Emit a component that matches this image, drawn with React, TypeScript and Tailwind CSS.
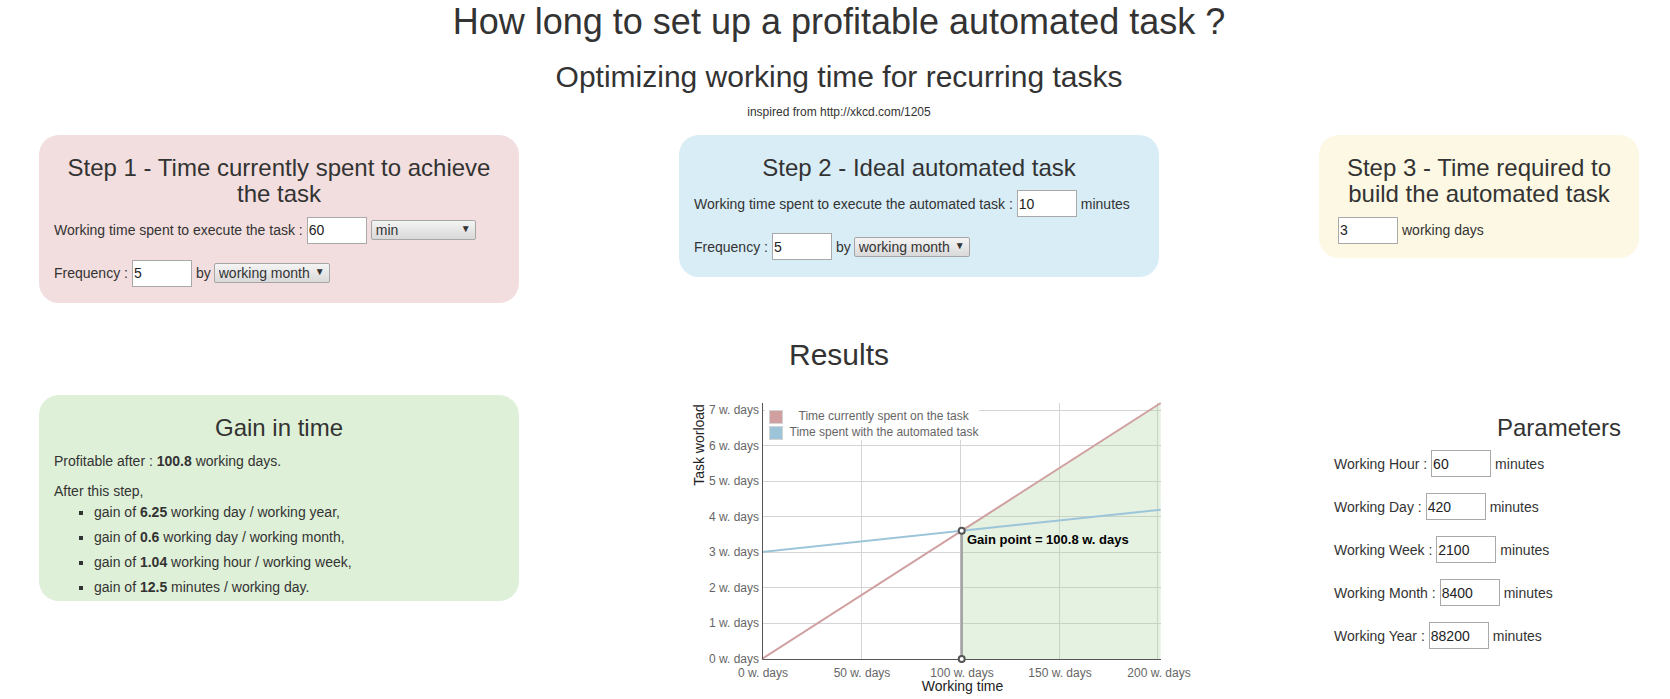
import React from 'react';

const NumberInput = ({ value }: { value: string }) => (
  <input
    type="text"
    defaultValue={value}
    className="w-[60px] h-[27px] border border-[#a9a9a9] bg-white px-[1px] text-[14px] text-[#222] outline-none"
  />
);

const Select = ({ options, width }: { options: string[]; width: string }) => (
  <span className={`relative inline-block h-[20px] ${width}`}>
    <select className="block h-full w-full appearance-none rounded-[2px] border border-[#a6a6a6] bg-gradient-to-b from-[#f4f4f4] to-[#d9d9d9] pl-1 text-[14px] leading-[18px] text-[#333] outline-none">
      {options.map((o) => (
        <option key={o}>{o}</option>
      ))}
    </select>
    <span className="pointer-events-none absolute right-[5px] top-[3px] text-[10px] leading-[12px] text-[#333]">▼</span>
  </span>
);

const Row = ({ children, className = '' }: { children: React.ReactNode; className?: string }) => (
  <div className={`flex h-[27px] items-center gap-1 text-[14px] ${className}`}>{children}</div>
);

const PanelTitle = ({ children }: { children: React.ReactNode }) => (
  <h3 className="mb-[9px] mt-5 text-center text-[24px] leading-[26.4px]">{children}</h3>
);

const unitOptions = ['working month', 'working year', 'working week', 'working day'];

function Chart() {
  const hLines = [411.5, 446.5, 482.5, 517.5, 553.5, 588.5, 624.5];
  const vLines = [862.5, 961.5, 1060.5, 1158.5];
  const yLabels = [
    ['7 w. days', 415],
    ['6 w. days', 451],
    ['5 w. days', 486],
    ['4 w. days', 522],
    ['3 w. days', 557],
    ['2 w. days', 593],
    ['1 w. days', 628],
    ['0 w. days', 664],
  ] as const;
  const xLabels = [
    ['0 w. days', 764],
    ['50 w. days', 863],
    ['100 w. days', 963],
    ['150 w. days', 1061],
    ['200 w. days', 1160],
  ] as const;

  return (
    <svg width="530" height="303" viewBox="680 396 530 303" className="block max-w-none overflow-visible">
      {/* grid */}
      {hLines.map((y) => (
        <line key={y} x1="763" x2="1162" y1={y} y2={y} stroke="#d4d4d4" />
      ))}
      {vLines.map((x) => (
        <line key={x} x1={x} x2={x} y1="404" y2="660" stroke="#d4d4d4" />
      ))}

      {/* gain area */}
      <polygon points="962.7,531.7 1161.7,404 1161.7,660 962.7,660" fill="#a9cf9b" fillOpacity="0.3" />

      {/* legend */}
      <rect x="766" y="404" width="214" height="37" fill="#fff" />
      <rect x="770.5" y="411.5" width="13" height="13" fill="#d0a0a0" stroke="#d4d4d4" />
      <rect x="770.5" y="427.5" width="13" height="13" fill="#9dc5d9" stroke="#d4d4d4" />
      <g fontSize="12" fill="#666">
        <text x="799.5" y="421">Time currently spent on the task</text>
        <text x="790.5" y="437">Time spent with the automated task</text>
      </g>

      {/* series */}
      <line x1="763" y1="553" x2="1161.7" y2="510.7" stroke="#9dc5d9" strokeWidth="2" />
      <line x1="763" y1="660" x2="1161.7" y2="404" stroke="#d0a0a0" strokeWidth="2" />
      <line x1="962.7" y1="532" x2="962.7" y2="660" stroke="#a3a3a3" strokeWidth="2.5" />

      {/* axes */}
      <path d="M763.5 404V660.5H1162" fill="none" stroke="#555" />

      {/* gain markers */}
      <circle cx="962.7" cy="531.7" r="3" fill="#fff" stroke="#555" strokeWidth="2" />
      <circle cx="962.7" cy="660" r="3" fill="#fff" stroke="#555" strokeWidth="2" />
      <text x="968" y="545" fontSize="13" fontWeight="700" fill="#000">
        Gain point = 100.8 w. days
      </text>

      {/* tick labels */}
      <g fontSize="12" fill="#666">
        {yLabels.map(([t, y]) => (
          <text key={t} x="760" y={y} textAnchor="end">
            {t}
          </text>
        ))}
        {xLabels.map(([t, x]) => (
          <text key={t} x={x} y="678" textAnchor="middle">
            {t}
          </text>
        ))}
      </g>

      <text x="963.5" y="692" fontSize="14" fill="#222" textAnchor="middle">
        Working time
      </text>
      <text transform="translate(705 446) rotate(-90)" fontSize="14" fill="#222" textAnchor="middle">
        Task worload
      </text>
    </svg>
  );
}

const params = [
  ['Working Hour', '60'],
  ['Working Day', '420'],
  ['Working Week', '2100'],
  ['Working Month', '8400'],
  ['Working Year', '88200'],
];

export default function App() {
  return (
    <div className="min-h-[699px] bg-white font-['Liberation_Sans',Arial,sans-serif] text-[14px] leading-5 text-[#333]">
      {/* Header */}
      <div className="pl-2 text-center">
        <h1 className="pt-[2px] text-[36px] leading-[40px]">How long to set up a profitable automated task ?</h1>
        <h2 className="mt-[18px] text-[30px] leading-[33px]">Optimizing working time for recurring tasks</h2>
        <p className="mt-[12px] text-[12px] leading-[14px]">inspired from http://xkcd.com/1205</p>
      </div>

      {/* Steps */}
      <div className="mt-4 flex items-start gap-[160px] pl-[39px]">
        <section className="w-[480px] rounded-[20px] bg-[#f2dede] px-[15px] pb-4">
          <PanelTitle>Step 1 - Time currently spent to achieve the task</PanelTitle>
          <Row className="mb-4">
            <span>Working time spent to execute the task :</span>
            <NumberInput value="60" />
            <Select options={['min', 'hour', 'day']} width="w-[105px]" />
          </Row>
          <Row>
            <span>Frequency :</span>
            <NumberInput value="5" />
            <span>by</span>
            <Select options={unitOptions} width="-ml-px w-[116px]" />
          </Row>
        </section>

        <section className="w-[480px] rounded-[20px] bg-[#d9edf7] px-[15px] pb-[17px]">
          <PanelTitle>Step 2 - Ideal automated task</PanelTitle>
          <Row className="mb-4">
            <span>Working time spent to execute the automated task :</span>
            <NumberInput value="10" />
            <span>minutes</span>
          </Row>
          <Row>
            <span>Frequency :</span>
            <NumberInput value="5" />
            <span>by</span>
            <Select options={unitOptions} width="-ml-px w-[116px]" />
          </Row>
        </section>

        <section className="w-[320px] rounded-[20px] bg-[#fcf8e3] px-[15px] pb-[14px]">
          <PanelTitle>Step 3 - Time required to build the automated task</PanelTitle>
          <Row className="pl-1">
            <NumberInput value="3" />
            <span>working days</span>
          </Row>
        </section>
      </div>

      <h2 className="mt-[35px] pl-2 text-center text-[30px] leading-[33px]">Results</h2>

      {/* Results */}
      <div className="mt-[24px] flex items-start gap-[160px] pl-[39px]">
        <section className="w-[480px] rounded-[20px] bg-[#dff0d8] px-[15px] pb-px">
          <PanelTitle>Gain in time</PanelTitle>
          <p className="mb-[10px] pt-px">
            Profitable after : <b>100.8</b> working days.
          </p>
          <p>After this step,</p>
          <ul className="-mt-px list-[square] pl-[40px] leading-[25px]">
            <li>
              gain of <b>6.25</b> working day / working year,
            </li>
            <li>
              gain of <b>0.6</b> working day / working month,
            </li>
            <li>
              gain of <b>1.04</b> working hour / working week,
            </li>
            <li>
              gain of <b>12.5</b> minutes / working day.
            </li>
          </ul>
        </section>

        <div className="w-[480px]">
          <Chart />
        </div>

        <section className="w-[320px] px-[15px]">
          <h3 className="mb-[9px] mt-5 pr-[3px] text-right text-[24px] leading-[26.4px]">Parameters</h3>
          {params.map(([label, value]) => (
            <Row key={label} className="mb-4">
              <span>{label} :</span>
              <NumberInput value={value} />
              <span>minutes</span>
            </Row>
          ))}
        </section>
      </div>
    </div>
  );
}
